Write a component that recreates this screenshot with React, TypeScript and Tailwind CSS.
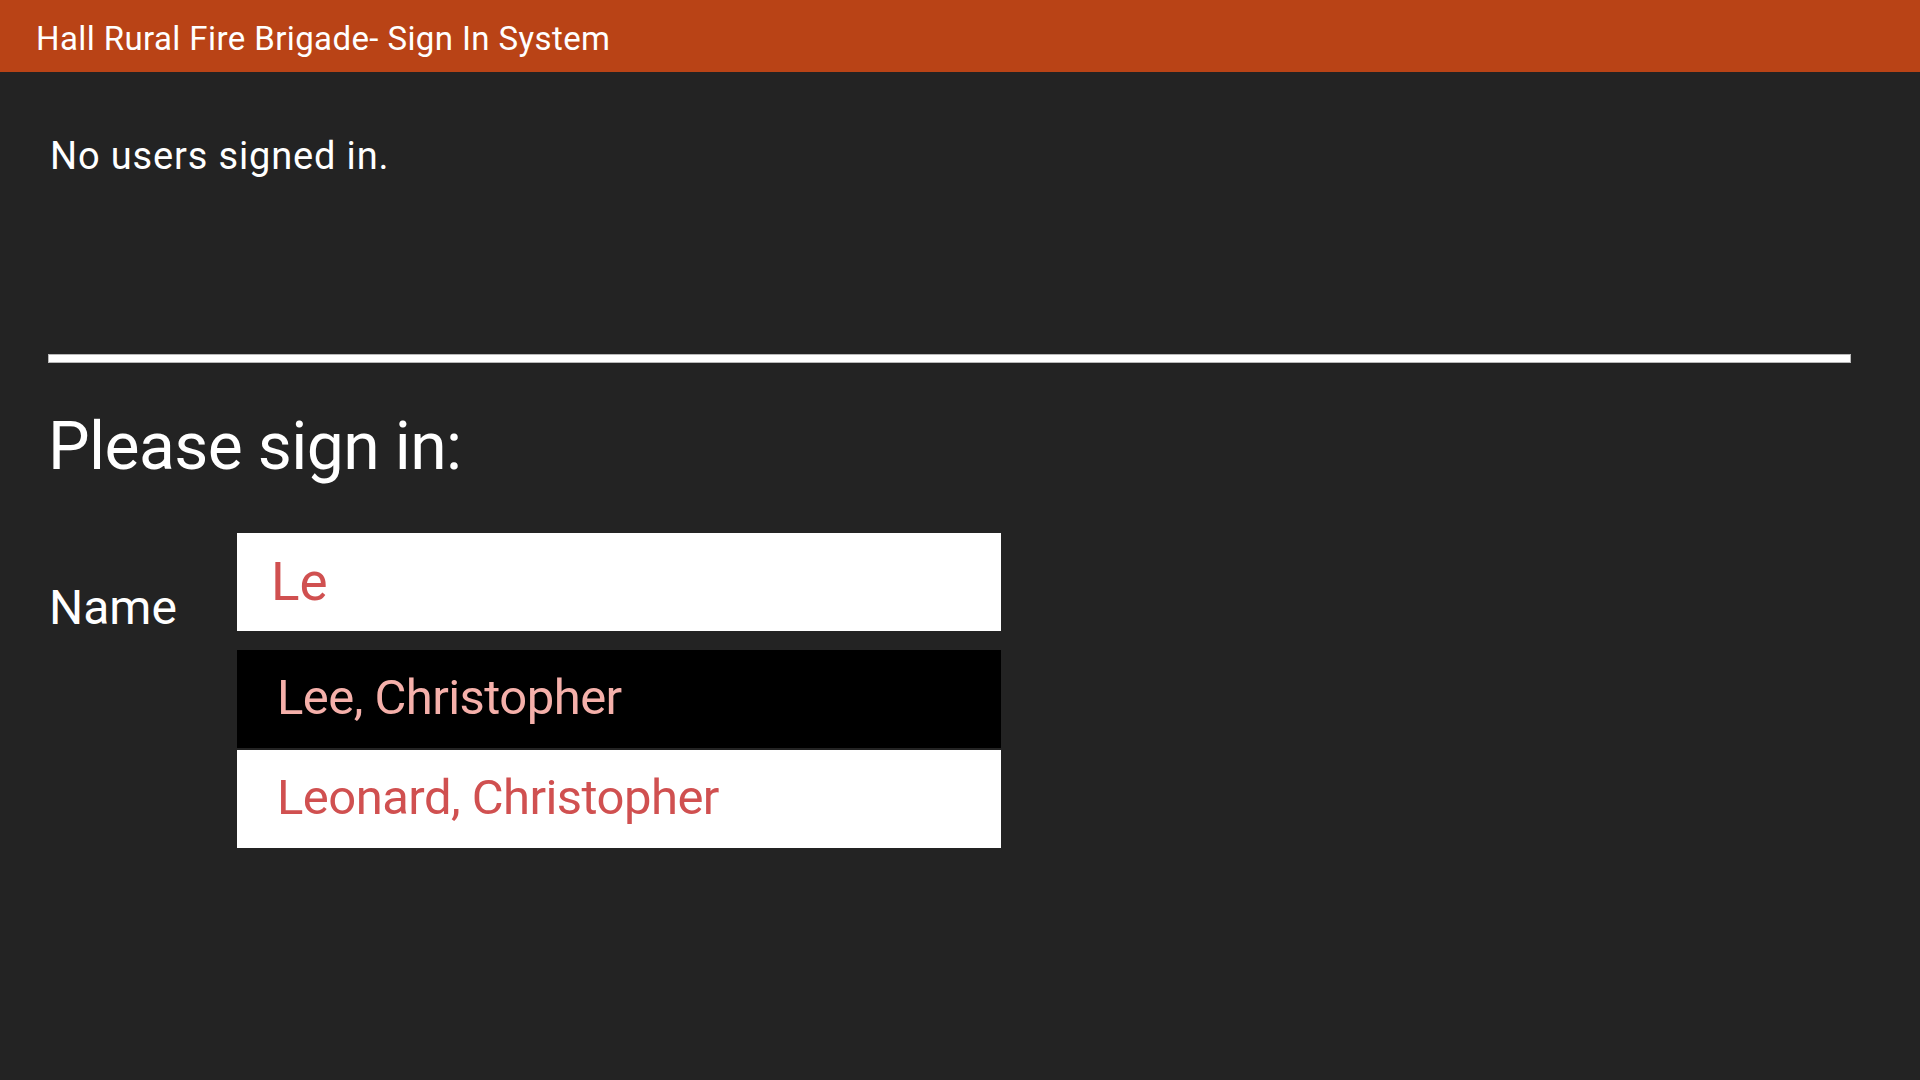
import React from "react";

export default function App() {
  return (
    <div
      className="w-[1920px] h-[1080px] bg-[#232323] text-white overflow-hidden"
      style={{ fontFamily: "Roboto, 'Noto Sans', sans-serif" }}
    >
      <header className="h-[72px] bg-[#b94316] pl-[36px] pt-[22px]">
        <div className="text-[33px] leading-none tracking-[0.4px] text-white">Hall Rural Fire Brigade- Sign In System</div>
      </header>
      <main className="px-[48px] pt-[65px]">
        <p className="text-[38px] leading-none tracking-[0.85px] pl-[2px]">No users signed in.</p>
        <div className="mt-[179px] w-[1803px] h-[9px] bg-white border border-[#b8b8b8]" />
        <h2 className="mt-[51px] text-[66px] leading-none tracking-[-0.6px]">Please sign in:</h2>
        <div className="mt-[53px] flex items-start">
          <div className="w-[189px]">
            <div className="mt-[51px] text-[48px] leading-none pl-[1px]">Name</div>
          </div>
          <div className="w-[764px]">
            <div className="h-[98px] bg-white flex items-center pl-[34px]">
              <span className="text-[53px] leading-none text-[#d05050]">Le</span>
            </div>
            <ul className="mt-[19px] flex flex-col gap-[2px]">
              <li className="h-[98px] bg-black flex items-center pl-[40px] pb-[4px]">
                <span className="text-[49px] leading-none tracking-[-0.55px] text-[#f5b0aa]">Lee, Christopher</span>
              </li>
              <li className="h-[98px] bg-white flex items-center pl-[40px] pb-[4px]">
                <span className="text-[49px] leading-none tracking-[-0.55px] text-[#d05050]">Leonard, Christopher</span>
              </li>
            </ul>
          </div>
        </div>
      </main>
    </div>
  );
}
